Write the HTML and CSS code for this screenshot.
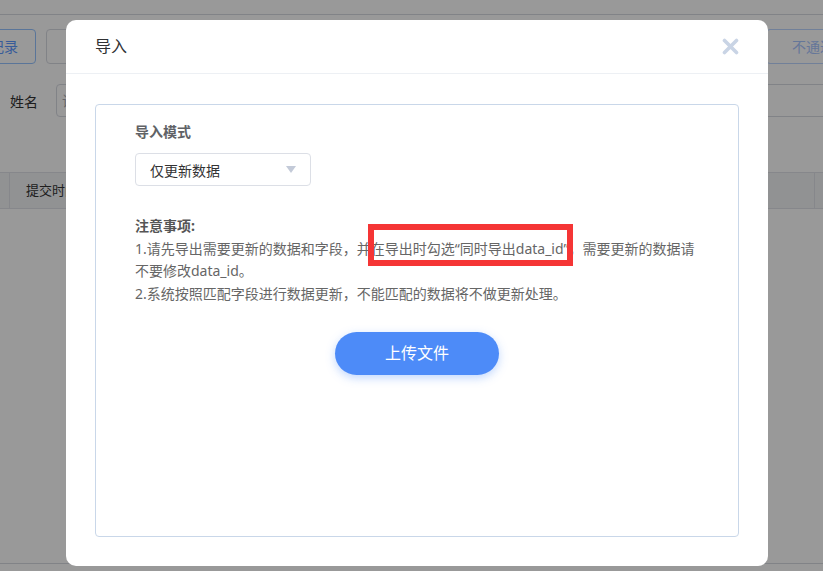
FILE: index.html
```html
<!DOCTYPE html>
<html lang="zh-CN">
<head>
<meta charset="utf-8">
<title>导入</title>
<link rel="stylesheet" href="styles.css">
</head>
<body>
<div class="page">
  <div class="topbar"></div>
  <div class="toolbar">
    <div class="btn btn-blue">导出记录</div>
    <div class="btn btn-default">导入数据</div>
    <div class="spacer"></div>
    <div class="btn btn-light">不通过</div>
  </div>
  <div class="search">
    <span class="search-label">姓名</span>
    <div class="search-input">请输入姓名</div>
  </div>
  <div class="table-head">
    <div class="th th-check"></div>
    <div class="th th-time">提交时间</div>
    <div class="th th-last"></div>
  </div>
  <div class="table-body"></div>
</div>

<div class="mask">
  <div class="dialog">
    <div class="dialog-header">
      <span class="dialog-title">导入</span>
      <svg class="dialog-close" width="17" height="17" viewBox="0 0 17 17">
        <path d="M2.5 2.5 L14.5 14.5 M14.5 2.5 L2.5 14.5" stroke="#c9d4e5" stroke-width="3.6" stroke-linecap="round" fill="none"/>
      </svg>
    </div>
    <div class="dialog-body">
      <div class="import-box">
        <div class="field-label">导入模式</div>
        <div class="select">
          <span class="select-text">仅更新数据</span>
          <svg class="select-arrow" width="10" height="7" viewBox="0 0 10 7"><path d="M0 0 H10 L5 7 Z" fill="#c3cad8"/></svg>
        </div>
        <div class="notes">
          <div class="notes-title">注意事项:</div>
          <div class="notes-line">1.请先导出需要更新的数据和字段，并在导出时勾选“同时导出data_id”，需要更新的数据请不要修改data_id。</div>
          <div class="notes-line">2.系统按照匹配字段进行数据更新，不能匹配的数据将不做更新处理。</div>
        </div>
        <div class="upload-wrap">
          <div class="upload-btn">上传文件</div>
        </div>
        <div class="highlight"></div>
      </div>
    </div>
  </div>
</div>
</body>
</html>
```

FILE: styles.css
```css
* { box-sizing: border-box; }

html, body {
  margin: 0;
  padding: 0;
  width: 823px;
  height: 571px;
  overflow: hidden;
  background: #ffffff;
  font-family: "Noto Sans", "Noto Sans CJK SC", sans-serif;
}

.page {
  width: 823px;
  height: 571px;
  overflow: hidden;
}

.topbar {
  height: 15px;
  border-bottom: 1px solid #d8dbe2;
}

.toolbar {
  display: flex;
  margin-top: 14px;
  height: 35px;
  gap: 10px;
}

.btn {
  height: 35px;
  border-radius: 4px;
  font-size: 14px;
  line-height: 33px;
  white-space: nowrap;
}

.btn-blue {
  margin-left: -54px;
  border: 1px solid #96c4ff;
  color: #5c99ff;
  background: #ffffff;
  padding: 0 17px 0 15px;
}

.btn-default {
  border: 1px solid #d8dbe2;
  color: #555;
  padding: 0 20px 0 22px;
}

.spacer { flex: 1; }

.btn-light {
  margin-right: -34px;
  border: 1px solid #bcd6ff;
  color: #a9c6ff;
  padding: 0 22px 0 25px;
}

.search {
  display: flex;
  align-items: center;
  margin-top: 20px;
  height: 33px;
}

.search-label {
  margin-left: 10px;
  width: 46px;
  flex: none;
  font-size: 14px;
  color: #333;
}

.search-input {
  width: 820px;
  flex: none;
  height: 33px;
  border: 1px solid #d8dbe2;
  border-radius: 4px;
  padding-left: 5px;
  font-size: 14px;
  line-height: 31px;
  color: #a8abb2;
}

.table-head {
  display: flex;
  margin-top: 55px;
  height: 37px;
  background: #f2f3f6;
  border-top: 1px solid #dfe2e8;
  border-bottom: 1px solid #dfe2e8;
}

.th {
  height: 35px;
  font-size: 13px;
  line-height: 35px;
  color: #333;
}

.th-check { width: 10px; border-right: 1px solid #dfe2e8; }
.th-time { width: 805px; padding-left: 16px; border-right: 1px solid #dfe2e8; }
.th-last { flex: 1; }

.table-body {
  height: 355px;
  border-bottom: 1px solid #d8dbe2;
}

/* mask + dialog */
.mask {
  position: fixed;
  left: 0;
  top: 0;
  width: 823px;
  height: 571px;
  background: rgba(0, 0, 0, 0.4);
  padding: 20px 0 0 66px;
}

.dialog {
  width: 702px;
  height: 546px;
  background: #ffffff;
  border-radius: 10px;
  display: flex;
  flex-direction: column;
}

.dialog-header {
  height: 54px;
  flex: none;
  display: flex;
  align-items: center;
  justify-content: space-between;
  padding: 0 29px 1px 29px;
  border-bottom: 1px solid #edf0f4;
}

.dialog-title {
  font-size: 16px;
  color: #303133;
  line-height: 24px;
}

.dialog-close { display: block; }

.dialog-body {
  flex: 1;
  display: flex;
  padding: 30px 29px 29px 29px;
}

.import-box {
  flex: 1;
  position: relative;
  border: 1px solid #c9d7e9;
  border-radius: 4px;
  padding: 17px 39px 0 39px;
}

.field-label {
  font-size: 14px;
  font-weight: 600;
  color: #606266;
  line-height: 20px;
  margin-bottom: 11px;
}

.select {
  width: 176px;
  height: 33px;
  border: 1px solid #dcdfe6;
  border-radius: 4px;
  display: flex;
  align-items: center;
  justify-content: space-between;
  padding: 0 14px 0 14px;
}

.select-text {
  font-size: 14px;
  color: #333;
}

.select-arrow { display: block; }

.notes {
  margin-top: 29px;
  font-size: 14px;
  line-height: 22.5px;
  color: #666;
}

.notes-title {
  font-weight: 700;
  color: #555;
}

.upload-wrap {
  display: flex;
  justify-content: center;
  margin-top: 27px;
}

.upload-btn {
  width: 164px;
  height: 43px;
  border-radius: 22px;
  background: #4d8bf8;
  color: #ffffff;
  font-size: 16px;
  line-height: 43px;
  text-align: center;
  box-shadow: 0 3px 10px rgba(77, 139, 248, 0.35);
}

.highlight {
  position: absolute;
  left: 272px;
  top: 119px;
  width: 205px;
  height: 42px;
  border: 6px solid #f53535;
}
```
